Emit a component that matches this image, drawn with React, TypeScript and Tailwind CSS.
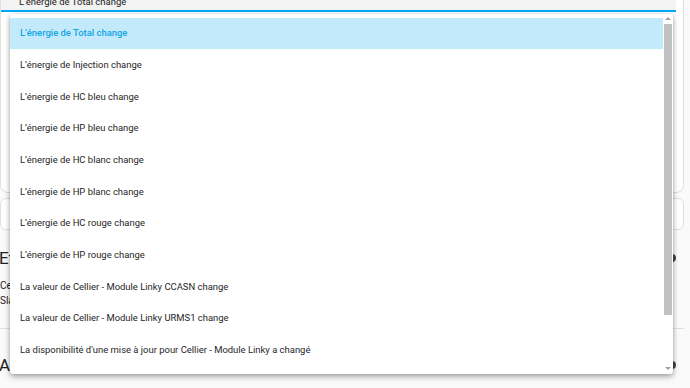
import React from "react";

const options = [
  "L’énergie de Total change",
  "L’énergie de Injection change",
  "L’énergie de HC bleu change",
  "L’énergie de HP bleu change",
  "L’énergie de HC blanc change",
  "L’énergie de HP blanc change",
  "L’énergie de HC rouge change",
  "L’énergie de HP rouge change",
  "La valeur de Cellier - Module Linky CCASN change",
  "La valeur de Cellier - Module Linky URMS1 change",
  "La disponibilité d'une mise à jour pour Cellier - Module Linky a changé",
];

export default function App() {
  return (
    <div className="relative w-[690px] h-[388px] overflow-hidden bg-[#fafafa] font-['Roboto',sans-serif] text-[#212121]">
      {/* page behind the menu */}
      <div className="flex flex-col">
        <div className="w-[684px] h-[193px] rounded-b-[8px] border border-t-0 border-[#e0e0e0] bg-white">
          <div className="w-[675px] h-[12px] bg-[#f3f3f3] border-b-2 border-[#03a9f4] overflow-hidden">
            <p className="pl-[18px] -mt-[5px] text-[9.5px] leading-[14px]">L’énergie de Total change</p>
          </div>
        </div>
        <div className="mt-[5px] w-[684px] h-[32px] rounded-[6px] border border-[#e0e0e0] bg-white" />
        <div className="flex items-center justify-between h-[52px] mt-[2px]">
          <p className="text-[17px] leading-[20px] -ml-[1px]">Etat</p>
          <span className="w-[8px] h-[8px] rounded-full bg-[#444] mr-[14px]" />
        </div>
        <div className="text-[10px] leading-[15px] -mt-[6px]">
          <p>Cellier</p>
          <p>Slave</p>
        </div>
        <div className="mt-[20px] w-[684px] h-[22px] border-t border-[#e0e0e0]" />
        <div className="flex items-center justify-between h-[30px]">
          <p className="text-[17px] leading-[20px] -ml-[1px]">Alors</p>
          <span className="w-[8px] h-[8px] rounded-full bg-[#444] mr-[14px]" />
        </div>
      </div>

      {/* dropdown menu overlay */}
      <div className="absolute left-[10px] top-[14px] w-[663px] h-[360px] bg-white rounded-[3px] shadow-[0_3px_6px_rgba(0,0,0,0.25),0_1px_4px_rgba(0,0,0,0.2)] flex">
        <ul className="flex-1 pt-[3.5px]">
          {options.map((o, i) => (
            <li
              key={o}
              className={
                i === 0
                  ? "h-[31.7px] flex items-center pl-[10px] text-[9.45px] bg-[#c2eafb] text-[#12a5e6] font-medium"
                  : "h-[31.7px] flex items-center pl-[10px] text-[9.45px] text-[#262626]"
              }
            >
              {o}
            </li>
          ))}
        </ul>
        <div className="w-[9px] mr-[1px] flex flex-col items-center pt-[3px] pb-[4px]">
          <span className="w-0 h-0 border-x-[3px] border-x-transparent border-b-[3px] border-b-[#a0a0a0]" />
          <div className="w-[8px] h-[291px] mt-[4px] bg-[#c1c1c1]" />
          <div className="flex-1" />
          <span className="w-0 h-0 border-x-[3px] border-x-transparent border-t-[3px] border-t-[#a0a0a0]" />
        </div>
      </div>
    </div>
  );
}
